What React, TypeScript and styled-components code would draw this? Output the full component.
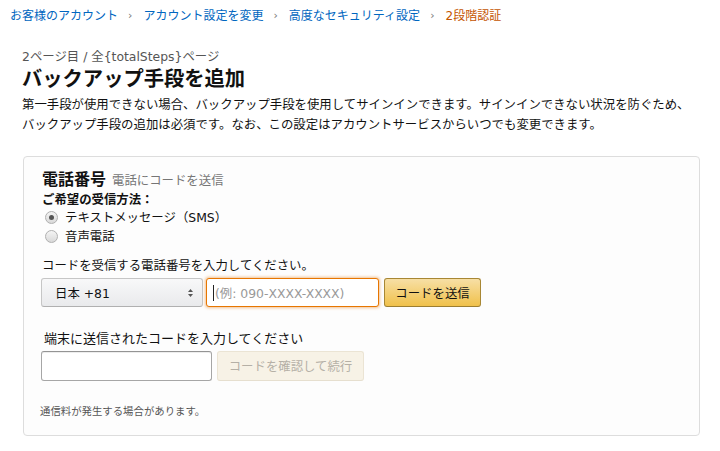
import React from "react";
import styled, { createGlobalStyle } from "styled-components";

const Global = createGlobalStyle`
  html, body { margin: 0; padding: 0; background: #fff; }
  body {
    font-family: "DejaVu Sans", "Noto Sans CJK JP", sans-serif;
    color: #111;
    -webkit-font-smoothing: antialiased;
  }
  * { box-sizing: border-box; }
`;

const Page = styled.div`
  width: 720px;
  height: 451px;
  overflow: hidden;
`;

const Breadcrumb = styled.nav`
  display: flex;
  align-items: center;
  padding: 6px 10px 0;
  font-size: 12px;
  line-height: 20px;
`;

const Crumb = styled.span<{ $current?: boolean }>`
  color: ${(p) => (p.$current ? "#c45500" : "#0066c0")};
`;

const Sep = styled.span`
  color: #767676;
  font-size: 11px;
  padding: 0 11px 0 10px;
`;

const Main = styled.main`
  padding: 22px 0 0 22px;
`;

const StepText = styled.div`
  font-size: 12.4px;
  line-height: 18px;
  color: #555;
`;

const Title = styled.h1`
  margin: 0;
  font-size: 20.3px;
  line-height: 26px;
  font-weight: 700;
  color: #111;
`;

const Desc = styled.p`
  margin: 3px 0 0;
  font-size: 12.4px;
  line-height: 20px;
  color: #111;
  width: 676px;
`;

const Card = styled.section`
  margin: 21px 0 0 1px;
  width: 677px;
  height: 280px;
  border: 1px solid #ddd;
  border-radius: 4px;
  background: #fdfdfd;
  padding: 13px 18px 0 18px;
`;

const CardHead = styled.div`
  display: flex;
  align-items: baseline;
  gap: 6px;
  line-height: 20px;
`;

const CardTitle = styled.h2`
  margin: 0;
  font-size: 16px;
  font-weight: 700;
  color: #111;
`;

const CardSub = styled.span`
  font-size: 12.4px;
  color: #767676;
`;

const MethodLabel = styled.div`
  font-size: 12.4px;
  font-weight: 700;
  line-height: 17px;
`;

const RadioRow = styled.label`
  display: flex;
  align-items: center;
  gap: 7px;
  padding-left: 3px;
  font-size: 12.4px;
  line-height: 19px;
  color: #111;
`;

const RadioDot = styled.span<{ $on?: boolean }>`
  width: 13px;
  height: 13px;
  border-radius: 50%;
  border: 1px solid #b0b0b0;
  background: linear-gradient(#f4f4f4, #d9d9d9);
  display: flex;
  align-items: center;
  justify-content: center;
  &::after {
    content: "";
    width: 5px;
    height: 5px;
    border-radius: 50%;
    background: ${(p) => (p.$on ? "#555" : "transparent")};
  }
`;

const FieldLabel = styled.div<{ $top: number; $size?: number; $indent?: number }>`
  margin-top: ${(p) => p.$top}px;
  padding-left: ${(p) => p.$indent ?? 0}px;
  font-size: ${(p) => p.$size ?? 12.4}px;
  line-height: 18px;
  color: #111;
`;

const Row = styled.div`
  display: flex;
  align-items: stretch;
  margin-top: 3px;
  margin-left: -1px;
`;

const Select = styled.div`
  width: 162px;
  height: 29px;
  display: flex;
  align-items: center;
  justify-content: space-between;
  padding: 0 8px 0 13px;
  border: 1px solid #c6c6c6;
  border-bottom-color: #b0b0b0;
  border-radius: 3px;
  background: linear-gradient(#f8f8f9, #e9eaec);
  font-size: 12.4px;
  color: #111;
`;

const PhoneInput = styled.div`
  width: 173px;
  height: 29px;
  margin-left: 3px;
  border: 1px solid #e77600;
  border-radius: 3px;
  box-shadow: 0 0 3px 1px rgba(228, 121, 17, 0.45);
  background: #fff;
  display: flex;
  align-items: center;
  padding-left: 6px;
  font-size: 12.4px;
  color: #999;
`;

const Caret = styled.span`
  width: 1px;
  height: 16px;
  background: #222;
  margin-right: 1px;
`;

const Button = styled.button<{ $w: number; $disabled?: boolean }>`
  width: ${(p) => p.$w}px;
  margin-left: 5px;
  border-radius: 3px;
  font-family: inherit;
  font-size: 12.4px;
  padding: 0;
  border: 1px solid ${(p) => (p.$disabled ? "#ebe4d4" : "#a88734")};
  border-bottom-color: ${(p) => (p.$disabled ? "#e6dfcf" : "#9c7e31")};
  background: ${(p) =>
    p.$disabled ? "#f7f2e6" : "linear-gradient(#f7dfa5, #f0c14b)"};
  color: ${(p) => (p.$disabled ? "#b5b0a6" : "#111")};
`;

const CodeInput = styled.div`
  width: 171px;
  height: 30px;
  border: 1px solid #a6a6a6;
  border-top-color: #949494;
  border-radius: 3px;
  background: #fff;
  box-shadow: inset 0 1px 0 rgba(0, 0, 0, 0.07);
`;

const Note = styled.div`
  margin-top: 23px;
  margin-left: -2px;
  font-size: 10.4px;
  line-height: 14px;
  color: #555;
`;

const Arrows = () => (
  <svg width="7" height="10" viewBox="0 0 7 10">
    <path d="M3.5 1 L6 4 H1 Z" fill="#555" />
    <path d="M3.5 9 L6 6 H1 Z" fill="#555" />
  </svg>
);

export default function App() {
  return (
    <Page>
      <Global />
      <Breadcrumb>
        <Crumb>お客様のアカウント</Crumb>
        <Sep>›</Sep>
        <Crumb>アカウント設定を変更</Crumb>
        <Sep>›</Sep>
        <Crumb>高度なセキュリティ設定</Crumb>
        <Sep>›</Sep>
        <Crumb $current>2段階認証</Crumb>
      </Breadcrumb>
      <Main>
        <StepText>2ページ目 / 全{"{totalSteps}"}ページ</StepText>
        <Title>バックアップ手段を追加</Title>
        <Desc>
          第一手段が使用できない場合、バックアップ手段を使用してサインインできます。サインインできない状況を防ぐため、バックアップ手段の追加は必須です。なお、この設定はアカウントサービスからいつでも変更できます。
        </Desc>
        <Card>
          <CardHead>
            <CardTitle>電話番号</CardTitle>
            <CardSub>電話にコードを送信</CardSub>
          </CardHead>
          <MethodLabel>ご希望の受信方法：</MethodLabel>
          <RadioRow>
            <RadioDot $on />
            テキストメッセージ（SMS）
          </RadioRow>
          <RadioRow>
            <RadioDot />
            音声電話
          </RadioRow>
          <FieldLabel $top={11}>コードを受信する電話番号を入力してください。</FieldLabel>
          <Row>
            <Select>
              <span>日本 +81</span>
              <Arrows />
            </Select>
            <PhoneInput>
              <Caret />
              (例: 090-XXXX-XXXX)
            </PhoneInput>
            <Button $w={97}>コードを送信</Button>
          </Row>
          <FieldLabel $top={23} $size={13} $indent={2}>
            端末に送信されたコードを入力してください
          </FieldLabel>
          <Row>
            <CodeInput />
            <Button $w={147} $disabled>
              コードを確認して続行
            </Button>
          </Row>
          <Note>通信料が発生する場合があります。</Note>
        </Card>
      </Main>
    </Page>
  );
}
